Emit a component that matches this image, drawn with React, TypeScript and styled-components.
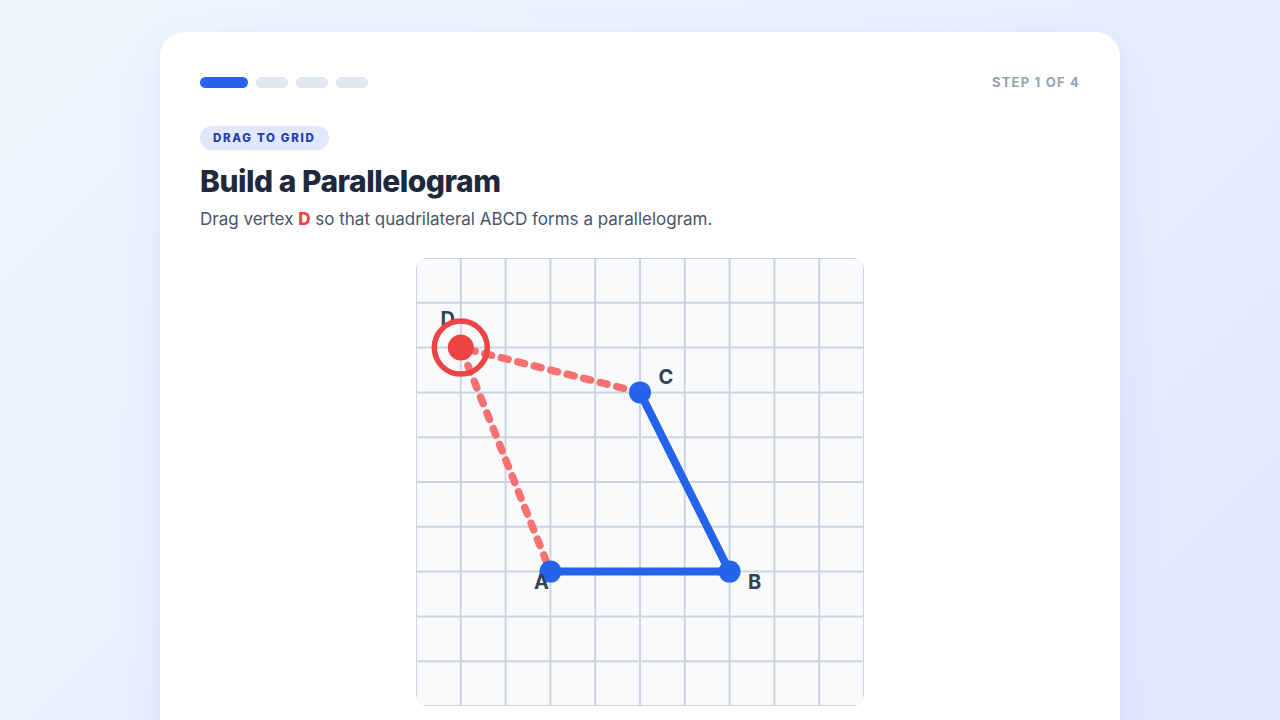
import React from "react";
import styled, { createGlobalStyle } from "styled-components";

const GlobalStyle = createGlobalStyle`
  html, body {
    margin: 0;
    padding: 0;
  }
  body {
    min-height: 100vh;
    background: linear-gradient(135deg, #eff6ff 0%, #e0e7ff 100%);
    font-family: Inter, "Noto Sans", "Liberation Sans", sans-serif;
    overflow: hidden;
  }
`;

const CELL = 44.8;
const SIZE = 448;

type Pt = { x: number; y: number };
const g = (x: number, y: number): Pt => ({ x: x * CELL, y: y * CELL });

const A = g(3, 7);
const B = g(7, 7);
const C = g(5, 3);
const D = g(1, 2);

const App = () => {
  const steps = [true, false, false, false];
  const lines = Array.from({ length: 11 }, (_, i) => i * CELL);

  return (
    <>
      <GlobalStyle />
      <Page>
        <Card>
          <TopRow>
            <Progress>
              {steps.map((on, i) => (
                <Pip key={i} active={on} />
              ))}
            </Progress>
            <StepLabel>Step 1 of 4</StepLabel>
          </TopRow>

          <Badge>Drag to Grid</Badge>
          <Title>Build a Parallelogram</Title>
          <Prompt>
            Drag vertex <Hl>D</Hl> so that quadrilateral ABCD forms a parallelogram.
          </Prompt>

          <BoardWrap>
            <Board>
              <svg width={SIZE} height={SIZE} viewBox={`0 0 ${SIZE} ${SIZE}`}>
                <rect x={0} y={0} width={SIZE} height={SIZE} fill="#f8fafc" />
                {lines.map((p, i) => (
                  <g key={i}>
                    <line x1={p} y1={0} x2={p} y2={SIZE} stroke="#cbd5e1" strokeWidth={2} />
                    <line x1={0} y1={p} x2={SIZE} y2={p} stroke="#cbd5e1" strokeWidth={2} />
                  </g>
                ))}

                {/* fixed sides */}
                <polyline
                  points={`${A.x},${A.y} ${B.x},${B.y} ${C.x},${C.y}`}
                  fill="none"
                  stroke="#2563eb"
                  strokeWidth={8}
                  strokeLinejoin="round"
                  strokeLinecap="round"
                />

                {/* draggable sides */}
                <polyline
                  points={`${C.x},${C.y} ${D.x},${D.y} ${A.x},${A.y}`}
                  fill="none"
                  stroke="#f87171"
                  strokeWidth={7.5}
                  strokeDasharray="7 10"
                  strokeLinecap="round"
                  strokeLinejoin="round"
                />

                <circle cx={A.x} cy={A.y} r={11} fill="#2563eb" />
                <circle cx={B.x} cy={B.y} r={11} fill="#2563eb" />
                <circle cx={C.x} cy={C.y} r={11} fill="#2563eb" />

                <VLabel x={A.x - 9} y={A.y + 17} textAnchor="middle">A</VLabel>
                <VLabel x={B.x + 25} y={B.y + 17} textAnchor="middle">B</VLabel>
                <VLabel x={C.x + 26} y={C.y - 8} textAnchor="middle">C</VLabel>
                <VLabel x={D.x - 13} y={D.y - 22} textAnchor="middle" fill="#ef4444">
                  D
                </VLabel>

                <circle cx={D.x} cy={D.y} r={26.5} fill="none" stroke="#ef4444" strokeWidth={5.5} />
                <circle cx={D.x} cy={D.y} r={13} fill="#ef4444" />
              </svg>
            </Board>
          </BoardWrap>
        </Card>
      </Page>
    </>
  );
};

export default App;

//styled-components

const Page = styled.div`
  padding-top: 32px;
  display: flex;
  justify-content: center;
`;

const Card = styled.div`
  width: 960px;
  min-height: 760px;
  box-sizing: border-box;
  padding: 40px;
  background: #ffffff;
  border-radius: 24px;
  box-shadow: 0 20px 50px rgba(79, 94, 180, 0.08), 0 2px 8px rgba(79, 94, 180, 0.04);
`;

const TopRow = styled.div`
  display: flex;
  align-items: center;
  justify-content: space-between;
  height: 20px;
`;

const Progress = styled.div`
  display: flex;
  gap: 8px;
`;

const Pip = styled.span<{ active: boolean }>`
  display: block;
  height: 11px;
  width: ${(p) => (p.active ? "48px" : "32px")};
  border-radius: 6px;
  background: ${(p) => (p.active ? "#2563eb" : "#e2e8f0")};
`;

const StepLabel = styled.div`
  font-size: 13px;
  font-weight: 700;
  letter-spacing: 1.2px;
  text-transform: uppercase;
  color: #94a3b8;
`;

const Badge = styled.div`
  display: inline-flex;
  align-items: center;
  height: 24px;
  margin-top: 34px;
  padding: 0 13px;
  border-radius: 12px;
  background: #e0e7ff;
  color: #1e40af;
  font-size: 11.5px;
  font-weight: 800;
  letter-spacing: 1.7px;
  text-transform: uppercase;
`;

const Title = styled.h1`
  margin: 12px 0 0;
  font-size: 30px;
  line-height: 38px;
  font-weight: 800;
  letter-spacing: -0.5px;
  color: #1e293b;
`;

const Prompt = styled.p`
  margin: 6px 0 0;
  font-size: 17px;
  line-height: 26px;
  color: #475569;
`;

const Hl = styled.span`
  color: #ef4444;
  font-weight: 800;
`;

const BoardWrap = styled.div`
  display: flex;
  justify-content: center;
  margin-top: 26px;
`;

const Board = styled.div`
  width: 448px;
  height: 448px;
  border-radius: 12px;
  overflow: hidden;
  box-shadow: inset 0 0 0 1px #cbd5e1;

  svg {
    display: block;
  }
`;

const VLabel = styled.text`
  font-family: Inter, "Noto Sans", "Liberation Sans", sans-serif;
  font-size: 20px;
  font-weight: 700;
  fill: #334155;
`;
